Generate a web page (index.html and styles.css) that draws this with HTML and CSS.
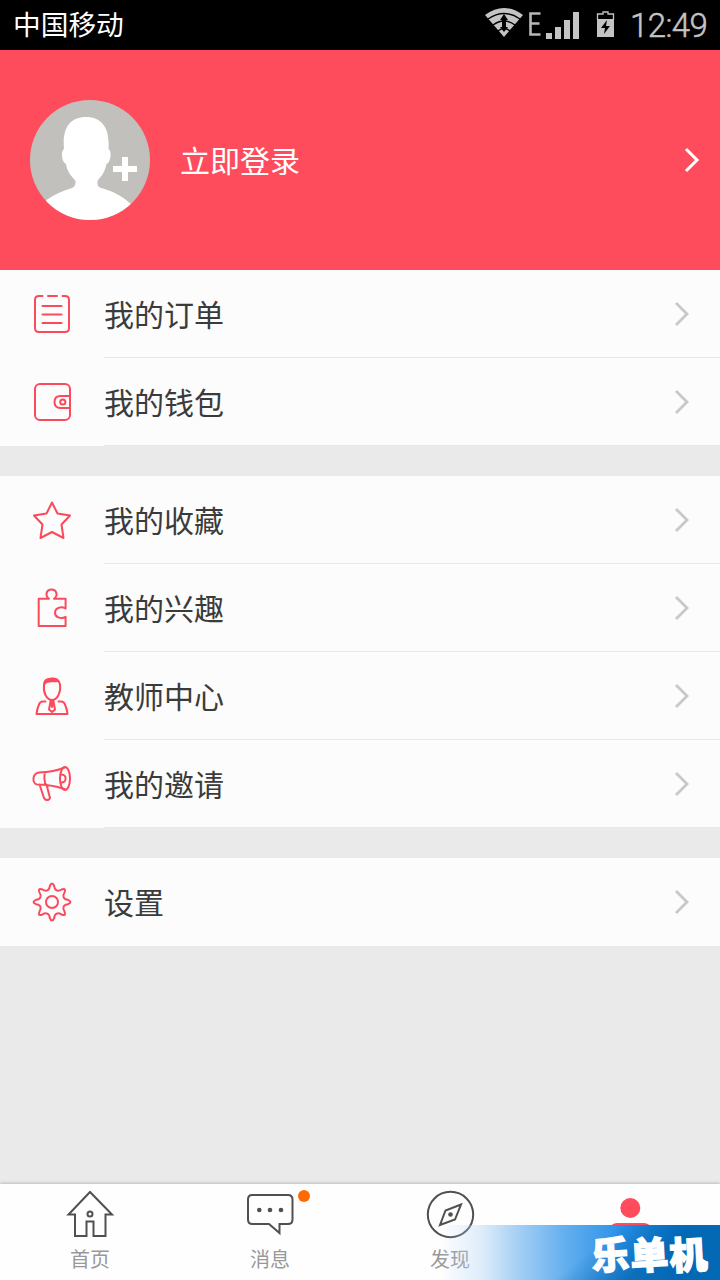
FILE: index.html
```html
<!DOCTYPE html>
<html lang="zh-CN">
<head>
<meta charset="utf-8">
<title>我的</title>
<link rel="stylesheet" href="styles.css">
</head>
<body>
<div class="screen">
  <header class="status">
    <span class="carrier">中国移动</span>
    <svg class="status-icons" width="150" height="50" viewBox="480 0 150 50">
      <path d="M485 15Q504 1 523 15L504 37Z" fill="#c4c4c4"/>
      <path d="M488 19Q504 8 520 19M493 25Q504 17 515 25M498 31Q504 26 510 31" fill="none" stroke="#000" stroke-width="1.500"/>
      <path d="M504 14l4 6h-2v7h2l-4 5-4-5h2v-7h-2z" fill="#000"/>
      <path d="M540.500 13.500H530.500V34.500H540.500M530.500 23.500H539.500" fill="none" stroke="#b8b8b8" stroke-width="2.600"/>
      <path d="M546 33h6v6h-6zM555 27h6v12h-6zM564 20h6v19h-6zM573 12h6v27h-6z" fill="#c4c4c4"/>
      <path d="M597.500 20V14H603V12H608V14H613.500V20" fill="none" stroke="#c4c4c4" stroke-width="1.300"/>
      <path d="M597 19h17v18h-17z" fill="#c4c4c4"/>
      <path d="M607 20l-6 8h4l-1 6 6-8h-4z" fill="#000"/>
    </svg>
    <span class="clock">12:49</span>
  </header>

  <section class="profile">
    <svg class="avatar" viewBox="0 0 120 120">
      <defs><clipPath id="disc"><circle cx="60" cy="60" r="60"/></clipPath></defs>
      <g clip-path="url(#disc)">
        <path d="M0 0h120v120H0z" fill="#c2c0bd"/>
        <path d="M34 49C32 28 40 17 56 17S80 28 78.500 49C82 50 81 63 76.500 64C75 72 71 77 68 80C66.500 84 68 87 71 88C83 91 92 96 101 104V122H14V102C23 95 32 91 42 88C45 87 46.500 83 45 80C41 76 37 71 36 64C31 62 31 50 34 49Z" fill="#fff"/>
        <path d="M92 57h6v9h9v6h-9v9h-6v-9h-9v-6h9z" fill="#fff"/>
      </g>
    </svg>
    <span class="login">立即登录</span>
    <svg class="arrow arrow-light" viewBox="0 0 16 26"><path d="M2 2L13 13L2 24"/></svg>
  </section>

  <main class="menu">
    <section class="group">
      <div class="row">
        <svg class="icon" viewBox="0 0 40 40"><path d="M10.500 2H7Q3 2 3 6V34Q3 38 7 38H33Q37 38 37 34V6Q37 2 33 2H30.500M16 2H25M10.500 12H29.500M10.500 20.500H29.500M10.500 29H29.500"/></svg>
        <div class="cell"><span>我的订单</span><svg class="arrow" viewBox="0 0 16 26"><path d="M2 2L13 13L2 24"/></svg></div>
      </div>
      <div class="row">
        <svg class="icon" viewBox="0 0 40 40"><rect x="3" y="2" width="35" height="36" rx="5"/><path d="M38 14H28.500Q22.500 14 22.500 20T28.500 26H38"/><circle cx="30.800" cy="20" r="2.600"/></svg>
        <div class="cell"><span>我的钱包</span><svg class="arrow" viewBox="0 0 16 26"><path d="M2 2L13 13L2 24"/></svg></div>
      </div>
    </section>
    <section class="group">
      <div class="row">
        <svg class="icon" viewBox="0 0 40 40"><path d="M20 2.500L25.500 13.500L38 15.500L29.500 24.500L31.500 38L20 32L8.500 38L10.500 24.500L2 15.500L14.500 13.500Z"/></svg>
        <div class="cell"><span>我的收藏</span><svg class="arrow" viewBox="0 0 16 26"><path d="M2 2L13 13L2 24"/></svg></div>
      </div>
      <div class="row">
        <svg class="icon" viewBox="0 0 40 40"><path d="M6.700 10.700H17C12.500 7.500 14.500 1.500 19.500 1.500S26.500 7.500 22 10.700H33.600V20.500C28.500 17.500 23 20.500 23 24.700S28.500 31.800 33.600 28.800V38H6.700Z"/></svg>
        <div class="cell"><span>我的兴趣</span><svg class="arrow" viewBox="0 0 16 26"><path d="M2 2L13 13L2 24"/></svg></div>
      </div>
      <div class="row">
        <svg class="icon" viewBox="0 0 40 40"><path d="M12 9C11 17 15 24 20 24S29 17 28 8.500C27 1 13 0 12 9ZM13.500 25.500H11Q8 25.500 7 28.500Q5 33 4.500 38H35.500Q35 33 33 28.500Q32 25.500 29 25.500H26.500M18.500 25.500H21.500L23 33.500L20 36L17 33.500Z"/><path class="solid" d="M12 11C10 4 14 1.500 19 2C24 1 29 3 28.500 10L26.500 6C20 7 14 4.500 12 11ZM18 25H22V29L20.500 32H19.500L18 29Z"/></svg>
        <div class="cell"><span>教师中心</span><svg class="arrow" viewBox="0 0 16 26"><path d="M2 2L13 13L2 24"/></svg></div>
      </div>
      <div class="row">
        <svg class="icon" viewBox="0 0 40 40"><path d="M32.500 3.500Q22 8 7 8.500C0 9.500 0 19.500 5 20.500Q19 20.500 32.500 25M13 8.500Q11.500 14 13.500 20.500M7.500 20.500L12 34Q13.500 37 17 35.500L18 34L14.500 20.500"/><ellipse cx="33" cy="14.500" rx="5" ry="11.500"/><path d="M29.500 10.500C35 10.500 35 18.500 29.500 18.500"/></svg>
        <div class="cell"><span>我的邀请</span><svg class="arrow" viewBox="0 0 16 26"><path d="M2 2L13 13L2 24"/></svg></div>
      </div>
    </section>
    <section class="group">
      <div class="row">
        <svg class="icon" viewBox="0 0 40 40"><path d="M17.800 4Q20 -1 22.200 4C22.500 8.500 26 10 29.500 7.500Q34.500 5.500 32.500 10.500C30 14 31.500 17.500 36 17.800Q41 20 36 22.200C31.500 22.500 30 26 32.500 29.500Q34.500 34.500 29.500 32.500C26 30 22.500 31.500 22.200 36Q20 41 17.800 36C17.500 31.500 14 30 10.500 32.500Q5.500 34.500 7.500 29.500C10 26 8.500 22.500 4 22.200Q-1 20 4 17.800C8.500 17.500 10 14 7.500 10.500Q5.500 5.500 10.500 7.500C14 10 17.500 8.500 17.800 4Z"/><circle cx="20" cy="20" r="6"/></svg>
        <div class="cell"><span>设置</span><svg class="arrow" viewBox="0 0 16 26"><path d="M2 2L13 13L2 24"/></svg></div>
      </div>
    </section>
  </main>

  <nav class="tabs">
    <div class="tab">
      <svg class="tab-icon" viewBox="0 0 60 60"><path d="M30 8L52 30.500H45.500V52H33.500V37.500H26.500V52H15V30.500H8.500Z"/><circle cx="30" cy="30" r="2.500"/></svg>
      <span>首页</span>
    </div>
    <div class="tab">
      <svg class="tab-icon" viewBox="0 0 60 60"><path d="M12 11H48Q52.500 11 52.500 15.500V35.500Q52.500 40 48 40H39.500V49L29 40H12.500Q8 40 8 35.500V15.500Q8 11 12 11Z"/><g class="dots"><circle cx="19.300" cy="26" r="2.300"/><circle cx="30" cy="26" r="2.300"/><circle cx="41" cy="26" r="2.300"/></g></svg>
      <span>消息</span>
      <i class="badge"></i>
    </div>
    <div class="tab">
      <svg class="tab-icon" viewBox="0 0 60 60"><circle cx="30.500" cy="30.500" r="22.700"/><path d="M41 20.500L25.500 26.500L20 41L35 35.500Z"/><circle class="dots" cx="30.500" cy="30.500" r="2.300"/></svg>
      <span>发现</span>
    </div>
    <div class="tab">
      <svg class="tab-icon active" viewBox="0 0 60 60"><circle cx="30.300" cy="24" r="10"/><path d="M10 45Q11 39 17 39H44Q50 39 51 45Z"/></svg>
      <span>我的</span>
    </div>
    <div class="watermark"><b>乐</b><b>单</b><b>机</b></div>
  </nav>
</div>
</body>
</html>
```
FILE: styles.css
```css
* { box-sizing: border-box; }
body { margin: 0; }
.screen {
  width: 720px;
  height: 1280px;
  display: flex;
  flex-direction: column;
  overflow: hidden;
  background: #eaeaea;
  color: #3b3b3b;
  font-family: "Noto Sans CJK SC", sans-serif;
}
.status {
  height: 50px;
  display: flex;
  align-items: center;
  padding: 0 12px 0 13px;
  background: #000;
}
.carrier { flex: 1; color: #fff; font-size: 27.700px; line-height: 44px; padding-bottom: 5px; }
.clock { width: 78px; color: #c4c4c4; font: 300 33px/50px Roboto, sans-serif; letter-spacing: -.6px; padding-top: 2px; -webkit-text-stroke: .5px #c4c4c4; }
.profile {
  height: 220px;
  display: flex;
  align-items: center;
  padding: 0 20px 0 30px;
  background: #ff4c5d;
}
.avatar { width: 120px; height: 120px; margin-right: 30px; }
.login { flex: 1; color: #fff; font-size: 30px; line-height: 44px; padding-bottom: 3px; }
.arrow { width: 16px; height: 26px; fill: none; stroke: #c8c8c8; stroke-width: 2.800; }
.arrow-light { stroke: #fff; stroke-width: 3; }
.menu { flex: 1; display: flex; flex-direction: column; gap: 30px; }
.group { background: #fcfcfc; }
.row { height: 88px; display: flex; align-items: center; padding-left: 32px; }
.icon {
  width: 40px;
  height: 40px;
  margin-right: 32px;
  fill: none;
  stroke: #fb4a5c;
  stroke-width: 2;
  stroke-linejoin: round;
  stroke-linecap: round;
}
.solid { fill: #fb4a5c; stroke: none; }
.cell {
  flex: 1;
  height: 88px;
  display: flex;
  align-items: center;
  justify-content: space-between;
  padding-right: 30px;
  border-bottom: 1px solid #e8e8e8;
  font-size: 30px;
  line-height: 44px;
}
.cell span { padding-bottom: 1px; }
.group:last-child .cell { border-bottom-color: transparent; }
.tabs {
  position: relative;
  height: 96px;
  display: grid;
  grid-template-columns: repeat(4, 1fr);
  background: #fefefe;
  box-shadow: 0 -1px 3px rgba(0, 0, 0, .2);
}
.tab {
  position: relative;
  display: flex;
  flex-direction: column;
  align-items: center;
  color: #999;
  font-size: 20px;
  line-height: 30px;
}
.tab-icon { width: 60px; height: 60px; fill: none; stroke: #505050; stroke-width: 2; }
.dots { fill: #505050; stroke: none; }
.active { fill: #ff4c5d; stroke: none; }
.badge {
  position: absolute;
  left: 118px;
  top: 6px;
  width: 12px;
  height: 12px;
  border-radius: 50%;
  background: #ff6a00;
}
.watermark {
  position: absolute;
  right: 0;
  bottom: 0;
  width: 280px;
  height: 55px;
  display: flex;
  justify-content: flex-end;
  padding-right: 12px;
  background:
    linear-gradient(140deg, transparent 52%, rgba(0, 95, 165, .65) 74%),
    linear-gradient(90deg, rgba(182, 215, 245, 0) 0, rgba(182, 215, 245, .45) 15%, #a9d1f5 27%, #62aeee 45%, #2c92e8 64%, #0879d2 85%);
  color: #fff;
  font-size: 38px;
  line-height: 55px;
  -webkit-text-stroke: 1.300px #fff;
}
.watermark b { font-weight: 900; transform: rotate(-3deg); width: 39px; }
```
